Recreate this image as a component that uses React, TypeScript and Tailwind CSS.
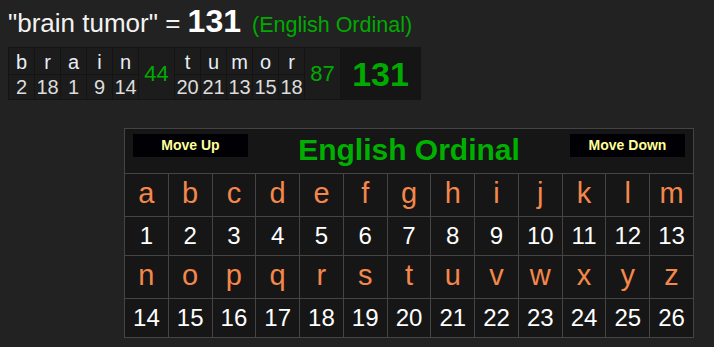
import React from "react";

const font = { fontFamily: '"Liberation Sans", Arial, sans-serif' };

type Word = { letters: string[]; values: number[]; sum: number };

const WORDS: Word[] = [
  { letters: ["b", "r", "a", "i", "n"], values: [2, 18, 1, 9, 14], sum: 44 },
  { letters: ["t", "u", "m", "o", "r"], values: [20, 21, 13, 15, 18], sum: 87 },
];

const ALPHA = "abcdefghijklmnopqrstuvwxyz".split("");

function Breakdown() {
  return (
    <table className="mt-[10px] ml-2 border-collapse bg-[#1c1c1c]">
      <tbody>
        <tr className="h-[27px]">
          {WORDS.map((w, wi) => (
            <React.Fragment key={wi}>
              {w.letters.map((l, i) => (
                <td
                  key={i}
                  className="w-[26px] border border-[#141414] pt-[2px] text-center align-middle text-[20px] leading-none text-[#e8eef4]"
                >
                  {l}
                </td>
              ))}
              <td
                rowSpan={2}
                className="w-[36px] border border-[#141414] text-center align-middle text-[22px] leading-none text-[#0a0]"
              >
                {w.sum}
              </td>
            </React.Fragment>
          ))}
          <td
            rowSpan={2}
            className="w-[80px] border border-[#141414] bg-[#151515] text-center align-middle text-[34px] font-bold leading-none text-[#0a0]"
          >
            131
          </td>
        </tr>
        <tr className="h-[25px]">
          {WORDS.map((w, wi) =>
            w.values.map((v, i) => (
              <td
                key={`${wi}-${i}`}
                className="border border-[#141414] text-center align-middle text-[20px] leading-none text-[#dddddd]"
              >
                {v}
              </td>
            ))
          )}
        </tr>
      </tbody>
    </table>
  );
}

function CipherChart() {
  const rows = [ALPHA.slice(0, 13), ALPHA.slice(13)];
  return (
    <table className="mt-[28px] ml-[124px] w-[570px] table-fixed border-collapse bg-[#161616]">
      <tbody>
        <tr className="h-[45px]">
          <td colSpan={13} className="border border-[#444] px-2 pt-[5px] align-top">
            <div className="flex items-start justify-between">
              <button className="h-[23px] w-[115px] bg-[#000005] text-[14px] font-bold text-[#ffff99]">
                Move Up
              </button>
              <span className="mt-[1px] text-[30px] font-bold leading-none text-[#00b000]">
                English Ordinal
              </span>
              <button className="h-[23px] w-[115px] bg-[#000005] text-[14px] font-bold text-[#ffff99]">
                Move Down
              </button>
            </div>
          </td>
        </tr>
        {rows.map((row, ri) => (
          <React.Fragment key={ri}>
            <tr className="h-[43px]">
              {row.map((l) => (
                <td
                  key={l}
                  className="border border-[#444] pb-[3px] text-center align-middle text-[29px] leading-none text-[#f4874b]"
                >
                  {l}
                </td>
              ))}
            </tr>
            <tr className="h-[39px]">
              {row.map((l) => (
                <td
                  key={l}
                  className="border border-[#444] text-center align-middle text-[24px] leading-none text-white"
                >
                  {ALPHA.indexOf(l) + 1}
                </td>
              ))}
            </tr>
          </React.Fragment>
        ))}
      </tbody>
    </table>
  );
}

export default function App() {
  return (
    <div className="h-[347px] w-[714px] overflow-hidden bg-[#222222]" style={font}>
      <div className="flex items-baseline pt-[5px] pl-2 leading-none">
        <span className="text-[26px] text-[#f2f2f2]">"brain tumor" =&nbsp;</span>
        <span className="text-[32px] font-bold text-white">131</span>
        <span className="ml-[11px] text-[21.5px] text-[#0a0]">(English Ordinal)</span>
      </div>
      <Breakdown />
      <CipherChart />
    </div>
  );
}
